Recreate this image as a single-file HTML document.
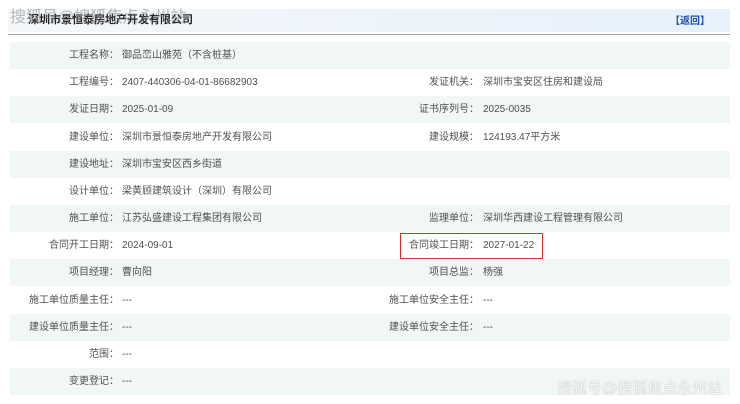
<!DOCTYPE html>
<html><head><meta charset="utf-8"><style>
body{margin:0;width:740px;height:404px;background:#fff;font-family:"Liberation Sans","Noto Sans CJK SC",sans-serif;font-size:10px;color:#505050;position:relative;overflow:hidden}
.hdr{position:absolute;left:8px;top:9px;width:722px;height:23px;background:linear-gradient(90deg,#f4f7fa,#e6f1fb)}
.line{position:absolute;left:8px;top:34px;width:722px;height:1px;background:#a0a0a0}
.title{position:absolute;left:28px;top:11px;font-size:11px;font-weight:bold;color:#222}
.wm1{position:absolute;left:10px;top:3px;font-size:16px;color:rgba(120,120,120,.5)}
.back{position:absolute;left:670px;top:12px;font-size:10px;font-weight:bold;color:#2050b0}
.row{position:absolute;left:10px;width:720px;height:27px}
.sh{background:#f1f7f7}
.l,.v{position:absolute;top:0;line-height:27px;white-space:nowrap}
.l{text-align:right}
.l1{right:611px}.v1{left:112px}.l2{right:251px}.v2{left:473px}
.red{position:absolute;left:400px;top:233px;width:141px;height:24px;border:1.5px solid #d83030}
.wm2{position:absolute;left:557px;top:377px;font-size:15px;color:rgba(255,255,255,.9);text-shadow:0 0 1px #999}
</style></head><body>
<div class="hdr"></div><div class="line"></div>
<div class="title">深圳市景恒泰房地产开发有限公司</div>
<div class="wm1">搜狐号@搜狐焦点永州站</div>
<div class="back">【返回】</div>
<div class="row sh" style="top:42px"><span class="l l1">工程名称：</span><span class="v v1">御品峦山雅苑（不含桩基）</span></div>
<div class="row" style="top:69px"><span class="l l1">工程编号：</span><span class="v v1">2407-440306-04-01-86682903</span><span class="l l2">发证机关：</span><span class="v v2">深圳市宝安区住房和建设局</span></div>
<div class="row sh" style="top:96px"><span class="l l1">发证日期：</span><span class="v v1">2025-01-09</span><span class="l l2">证书序列号：</span><span class="v v2">2025-0035</span></div>
<div class="row" style="top:124px"><span class="l l1">建设单位：</span><span class="v v1">深圳市景恒泰房地产开发有限公司</span><span class="l l2">建设规模：</span><span class="v v2">124193.47平方米</span></div>
<div class="row sh" style="top:151px"><span class="l l1">建设地址：</span><span class="v v1">深圳市宝安区西乡街道</span></div>
<div class="row" style="top:178px"><span class="l l1">设计单位：</span><span class="v v1">梁黄顾建筑设计（深圳）有限公司</span></div>
<div class="row sh" style="top:205px"><span class="l l1">施工单位：</span><span class="v v1">江苏弘盛建设工程集团有限公司</span><span class="l l2">监理单位：</span><span class="v v2">深圳华西建设工程管理有限公司</span></div>
<div class="row" style="top:232px"><span class="l l1">合同开工日期：</span><span class="v v1">2024-09-01</span><span class="l l2">合同竣工日期：</span><span class="v v2">2027-01-22</span></div>
<div class="row sh" style="top:259px"><span class="l l1">项目经理：</span><span class="v v1">曹向阳</span><span class="l l2">项目总监：</span><span class="v v2">杨强</span></div>
<div class="row" style="top:287px"><span class="l l1">施工单位质量主任：</span><span class="v v1">---</span><span class="l l2">施工单位安全主任：</span><span class="v v2">---</span></div>
<div class="row sh" style="top:314px"><span class="l l1">建设单位质量主任：</span><span class="v v1">---</span><span class="l l2">建设单位安全主任：</span><span class="v v2">---</span></div>
<div class="row" style="top:341px"><span class="l l1">范围：</span><span class="v v1">---</span></div>
<div class="row sh" style="top:368px"><span class="l l1">变更登记：</span><span class="v v1">---</span></div>
<div class="red"></div>
<div class="wm2">搜狐号@搜狐焦点永州站</div>
</body></html>
